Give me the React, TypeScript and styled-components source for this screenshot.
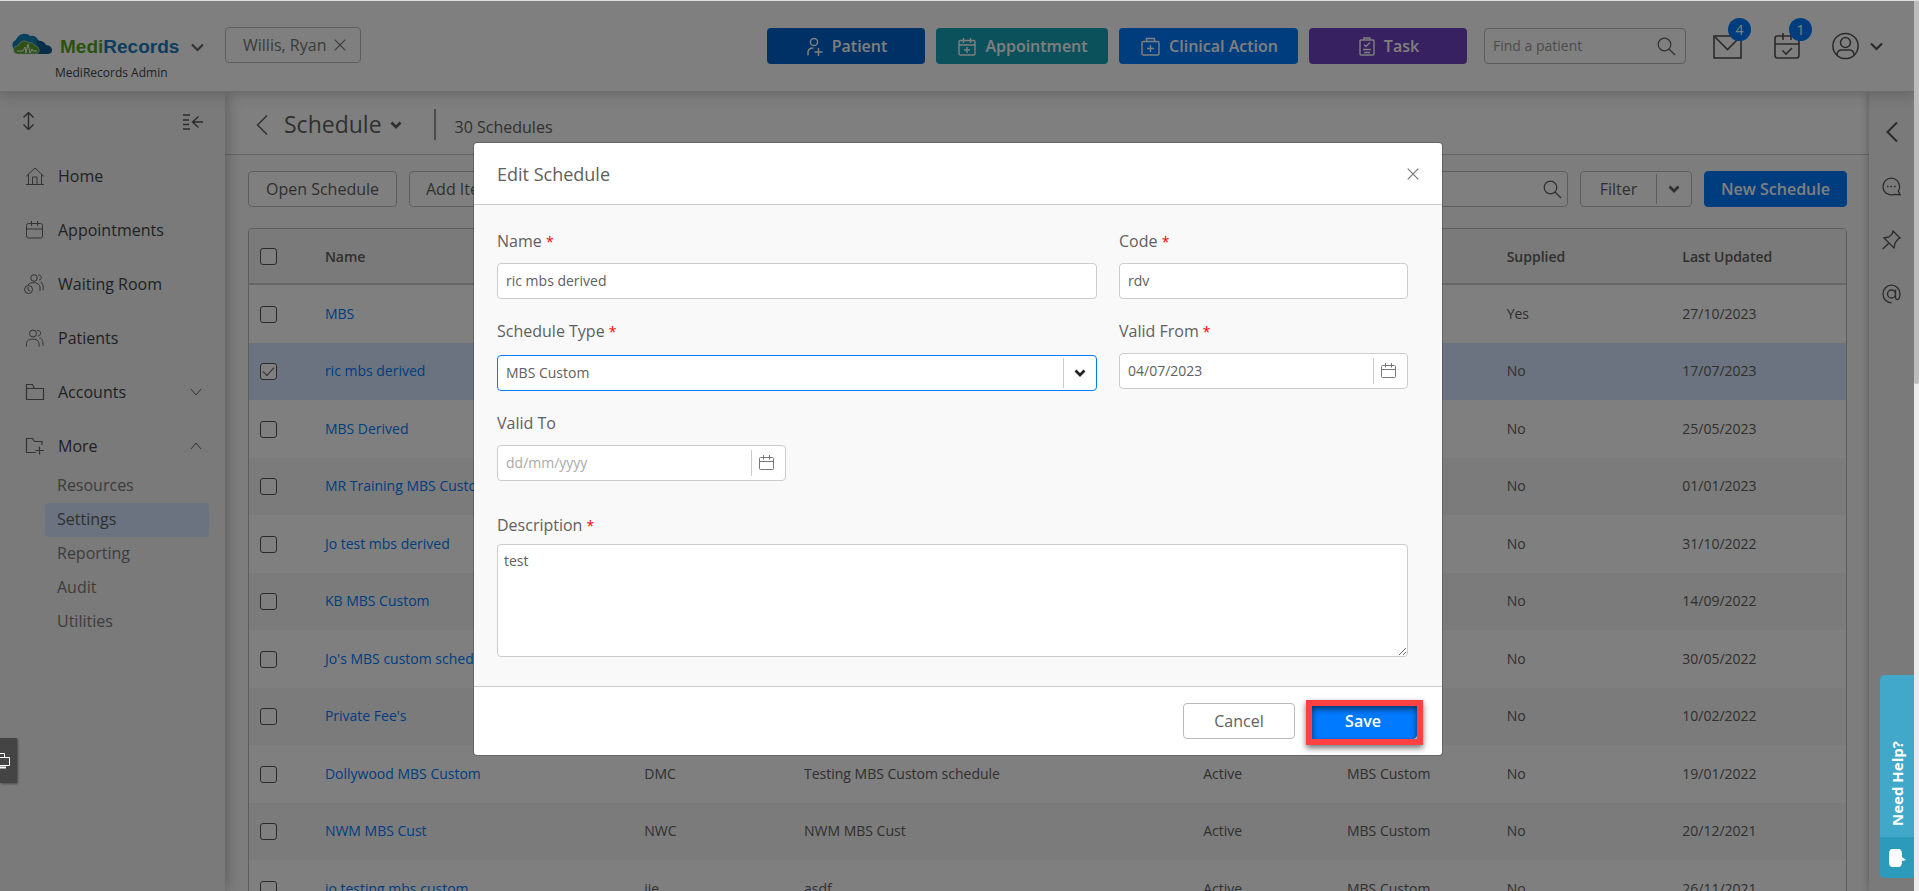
import React from "react";
import styled, { createGlobalStyle, css } from "styled-components";

const GlobalStyle = createGlobalStyle`
  *, *::before, *::after { box-sizing: border-box; }
  body {
    margin: 0;
    font-family: "Open Sans", "Noto Sans", sans-serif;
    font-size: 14px;
    color: #606060;
    overflow: hidden;
  }
  button, input, select, textarea { font: inherit; color: inherit; margin: 0; }
  button { cursor: pointer; }
  svg { display: block; flex: none; }
`;

/* ---------- shell ---------- */

const Window = styled.div`
  display: flex;
  height: 100vh;
  border-top: 1px solid #dcdfdf;
  background: #fff;
`;

const Page = styled.div`
  position: relative;
  flex: 1;
  min-width: 0;
  display: flex;
  flex-direction: column;
  overflow: hidden;
`;

const ScrollTrack = styled.div`
  flex: none;
  width: 5px;
  background: #ececec;
`;

const ScrollThumb = styled.div`
  height: 43%;
  border-radius: 0 0 3px 3px;
  background: #bcbcbc;
`;

const Body = styled.div`
  flex: 1;
  min-height: 0;
  display: flex;
`;

/* ---------- header ---------- */

const Header = styled.header`
  position: relative;
  z-index: 3;
  flex: none;
  display: flex;
  align-items: center;
  height: 91px;
  padding-right: 31px;
  background: #fff;
  border-bottom: 1px solid #ddd;
  box-shadow: 0 3px 12px rgba(0, 0, 0, 0.18);
`;

const Brand = styled.div`
  flex: none;
  align-self: stretch;
  width: 225px;
  padding: 32px 0 0 12px;
`;

const BrandRow = styled.div`
  display: flex;
  align-items: center;
  height: 28px;
  > svg { margin-bottom: 6px; }
  button { color: #666; }
`;

const BrandName = styled.span`
  margin: 0 12px 0 8px;
  font: bold 19px/28px "Liberation Sans", Arial, sans-serif;
  color: #1b7ab8;
  b { color: #56a51f; }
`;

const BrandSub = styled.div`
  margin-top: 3px;
  padding-left: 43px;
  font-size: 12px;
  font-weight: 500;
  line-height: 18px;
  color: #444;
`;

const PlainButton = styled.button`
  display: flex;
  align-items: center;
  justify-content: center;
  padding: 0;
  border: 0;
  background: none;
`;

const PatientTab = styled.div`
  display: flex;
  align-items: center;
  gap: 8px;
  height: 36px;
  margin-bottom: 2px;
  padding: 0 14px 0 17px;
  border: 1px solid #bbb;
  border-radius: 4px;
  font-size: 16px;
  color: #777;
`;

const Actions = styled.nav`
  display: flex;
  gap: 11px;
  margin-left: auto;
`;

const ActionButton = styled.button<{ $bg: string; $width: number }>`
  display: flex;
  align-items: center;
  justify-content: center;
  gap: 9px;
  width: ${(p) => p.$width}px;
  height: 36px;
  padding: 0 0 0 2px;
  border: 0;
  border-radius: 4px;
  background: ${(p) => p.$bg};
  color: #fff;
  font-size: 16px;
  font-weight: 600;
`;

const SearchBox = styled.label<{ $grow?: boolean }>`
  display: flex;
  align-items: center;
  height: 36px;
  padding: 0 9px 0 8px;
  border: 1px solid #bbb;
  border-radius: 4px;
  background: #fff;
  ${(p) => (p.$grow ? css`width: 320px; margin-left: auto; padding-right: 5px;` : css`width: 202px; margin: 0 27px 0 17px;`)}
  input {
    flex: 1;
    min-width: 0;
    padding: 0 0 2px;
    border: 0;
    outline: 0;
    background: none;
  }
  input::placeholder { color: #999; opacity: 1; }
`;

const HeaderIcons = styled.div`
  display: flex;
  align-items: center;
  gap: 32px;
`;

const IconButton = styled(PlainButton)`
  position: relative;
  gap: 11px;
  color: #555;
`;

const Badge = styled.span`
  position: absolute;
  left: 15px;
  top: -15px;
  width: 23px;
  height: 23px;
  border-radius: 50%;
  background: #007bff;
  color: #fff;
  line-height: 23px;
  text-align: center;
`;

/* ---------- left sidebar ---------- */

const Sidebar = styled.aside`
  position: relative;
  z-index: 2;
  flex: none;
  width: 225px;
  background: #f4f4f4;
  box-shadow: 2px 0 14px rgba(0, 0, 0, 0.26);
`;

const SidebarTools = styled.div`
  display: flex;
  justify-content: space-between;
  padding: 20px 22px 19px;
  color: #555;
`;

const MenuItem = styled.a`
  display: flex;
  align-items: center;
  height: 54px;
  padding: 0 23px 0 24px;
  font-size: 16px;
  font-weight: 500;
  color: #3f4549;
  text-decoration: none;
  svg { color: #666; }
  span { flex: 1; padding-left: 12px; }
`;

const SubMenu = styled.div`
  margin-top: -4px;
  padding: 0 16px 0 45px;
`;

const SubItem = styled.a<{ $active?: boolean }>`
  display: block;
  height: 34px;
  padding-left: 12px;
  border-radius: 4px;
  font-size: 16px;
  font-weight: 500;
  line-height: 32px;
  color: ${(p) => (p.$active ? "#606060" : "#7a7a7a")};
  background: ${(p) => (p.$active ? "#d4e6ff" : "none")};
  text-decoration: none;
`;

/* ---------- main ---------- */

const Main = styled.main`
  flex: 1;
  min-width: 0;
  overflow: hidden;
  background: #fbfbfb;
`;

const TitleBar = styled.div`
  display: flex;
  align-items: center;
  height: 63px;
  padding: 3px 0 0 31px;
  border-bottom: 1px solid #ccc;
  background: #fff;
`;

const Title = styled.h1`
  margin: 0 8px 0 16px;
  padding-bottom: 1px;
  font-size: 23px;
  font-weight: 500;
  line-height: 30px;
  color: #606060;
`;

const Count = styled.span`
  display: flex;
  align-items: center;
  height: 31px;
  margin-left: 32px;
  padding: 4px 0 0 19px;
  border-left: 2px solid #999;
  font-size: 16px;
`;

const Toolbar = styled.div`
  display: flex;
  gap: 12px;
  padding: 16px 22px 21px 23px;
`;

const Button = styled.button<{ $primary?: boolean; $width?: number }>`
  height: 36px;
  padding: 0 16px;
  border: 1px solid #bbb;
  border-radius: 4px;
  background: #fff;
  color: #606060;
  font-size: 16px;
  font-weight: 500;
  white-space: nowrap;
  ${(p) => p.$width && css`width: ${p.$width}px; padding: 0;`}
  ${(p) => p.$primary && css`background: #007bff; border-color: #007bff; color: #fff; font-weight: 600;`}
`;

const SplitButton = styled.div`
  display: flex;
  align-items: center;
  width: 112px;
  height: 36px;
  border: 1px solid #bbb;
  border-radius: 4px;
  background: #fff;
`;

const SplitMain = styled(PlainButton)`
  flex: 1;
  height: 30px;
  border-right: 1px solid #bbb;
  font-size: 16px;
  font-weight: 500;
`;

const SplitToggle = styled(PlainButton)`
  width: 34px;
  height: 34px;
`;

const TableFrame = styled.div`
  margin: 0 22px 0 23px;
  border: 1px solid #bbb;
  border-radius: 4px 4px 0 0;
  overflow: hidden;
  background: #fff;
`;

const Table = styled.table`
  width: 100%;
  table-layout: fixed;
  border-collapse: separate;
  border-spacing: 0;

  th, td { padding: 0 0 0 12px; text-align: left; white-space: nowrap; }
  th {
    height: 56px;
    background: #f4f4f4;
    border-bottom: 2px solid #ccc;
    font-weight: 600;
  }
  tbody tr:nth-child(odd) { height: 58px; }
  tbody tr:nth-child(even) { height: 57px; background: #f7f7f7; }
  td { padding-bottom: 2px; }
  th:first-child { padding-left: 11px; }
  td:first-child { padding: 0 0 0 11px; }
`;

const Col = styled.col<{ $share: number }>`
  width: ${(p) => p.$share}%;
`;

const Row = styled.tr<{ $selected: boolean }>`
  && td { ${(p) => p.$selected && css`background: #d4e6ff;`} }
`;

const RecordLink = styled.a`
  color: #007bff;
  text-decoration: none;
`;

const Check = styled.input`
  appearance: none;
  display: block;
  width: 17px;
  height: 17px;
  margin: 0;
  border: 1px solid #555;
  border-radius: 3px;
  background: #fff;
  &:checked::after {
    content: "";
    display: block;
    width: 11px;
    height: 6px;
    margin: 3px 0 0 2px;
    border: solid #555;
    border-width: 0 0 1px 1px;
    transform: rotate(-48deg);
  }
`;

/* ---------- right rail ---------- */

const Rail = styled.aside`
  position: relative;
  z-index: 2;
  flex: none;
  display: flex;
  flex-direction: column;
  align-items: center;
  width: 45px;
  padding-top: 13px;
  background: #f4f4f4;
  box-shadow: -1px 0 7px rgba(0, 0, 0, 0.26);
`;

const RailButton = styled(PlainButton)`
  width: 45px;
  height: 54px;
  color: #555;
`;

/* ---------- dialog ---------- */

const Scrim = styled.div`
  position: absolute;
  inset: 0;
  z-index: 10;
  padding: 141px 16px 0 18px;
  background: rgba(0, 0, 0, 0.5);
`;

const Dialog = styled.section`
  width: 100%;
  max-width: 970px;
  margin: 0 auto;
  border: 1px solid rgba(0, 0, 0, 0.2);
  border-radius: 4px;
  background: #fff;
  background-clip: padding-box;
`;

const DialogHeader = styled.div`
  display: flex;
  align-items: center;
  justify-content: space-between;
  height: 62px;
  padding: 0 23px;
  border-bottom: 1px solid #ccc;
  button { color: #777; }
`;

const DialogTitle = styled.h2`
  margin: 0;
  font-size: 18px;
  font-weight: 500;
  line-height: 24px;
`;

const Form = styled.form`
  display: grid;
  grid-template-columns: repeat(3, 1fr);
  gap: 20px 22px;
  padding: 24px 34px 29px 23px;
  background: #f9f9f9;
`;

const Field = styled.div<{ $span?: number; $gap?: number; $top?: number }>`
  display: flex;
  flex-direction: column;
  gap: ${(p) => p.$gap ?? 10}px;
  grid-column: span ${(p) => p.$span ?? 1};
  padding-top: ${(p) => p.$top ?? 0}px;
`;

const Label = styled.label`
  font-size: 16px;
  font-weight: 500;
  line-height: 24px;
  i { color: #f00; font-size: 14px; font-style: normal; font-weight: 400; line-height: 14px; }
`;

const Control = styled.div<{ $focused?: boolean }>`
  position: relative;
  display: flex;
  align-items: center;
  height: 36px;
  border: 1px solid ${(p) => (p.$focused ? "#007bff" : "#ccc")};
  border-radius: 4px;
  background: #fff;
  input, select {
    flex: 1;
    min-width: 0;
    height: 34px;
    padding: 0 8px 2px;
    border: 0;
    outline: 0;
    background: none;
    appearance: none;
  }
  input::placeholder { color: #aaa; opacity: 1; }
`;

const DateButton = styled(PlainButton)`
  width: 34px;
  height: 26px;
  padding: 0 5px 1px 0;
  border-left: 1px solid #ccc;
  color: #777;
`;

const SelectArrow = styled.span`
  position: absolute;
  right: 0;
  top: 2px;
  display: flex;
  align-items: center;
  justify-content: center;
  width: 33px;
  height: 30px;
  border-left: 1px solid #ccc;
  color: #222;
  pointer-events: none;
`;

const TextArea = styled.textarea`
  display: block;
  width: 100%;
  height: 113px;
  padding: 6px;
  border: 1px solid #ccc;
  border-radius: 4px;
  background: #fff;
  line-height: 20px;
  resize: vertical;
`;

const DialogFooter = styled.div`
  display: flex;
  justify-content: flex-end;
  gap: 14px;
  height: 69px;
  padding: 16px 25px 0 0;
  border-top: 1px solid #ccc;
`;

const Highlight = styled.div`
  position: relative;
  &::after {
    content: "";
    position: absolute;
    inset: -3px -6px auto -3px;
    height: 45px;
    border: 6px solid #ff4141;
    box-shadow: 0 3px 6px rgba(0, 0, 0, 0.55), inset 0 3px 6px rgba(0, 0, 0, 0.6);
    pointer-events: none;
  }
`;

/* ---------- edge tabs ---------- */

const HelpTab = styled.button`
  position: absolute;
  right: 0;
  bottom: 13px;
  z-index: 11;
  display: flex;
  flex-direction: column;
  width: 34px;
  height: 203px;
  padding: 0;
  border: 0;
  border-radius: 5px 0 0 5px;
  overflow: hidden;
  background: #41a8c9;
  color: #fff;
`;

const HelpText = styled.span`
  flex: 1;
  width: 34px;
  padding-top: 11px;
  writing-mode: vertical-rl;
  transform: rotate(180deg);
  font-size: 15px;
  font-weight: 700;
  line-height: 34px;
  text-align: left;
`;

const HelpIcon = styled.span`
  display: flex;
  align-items: center;
  justify-content: center;
  width: 34px;
  height: 41px;
  background: #2c9bbb;
`;

const ScreenTab = styled.button`
  position: absolute;
  left: 0;
  bottom: 108px;
  z-index: 11;
  display: flex;
  align-items: center;
  width: 17px;
  height: 45px;
  padding: 0;
  border: 0;
  background: #444;
  box-shadow: 1px 1px 2px rgba(0, 0, 0, 0.4);
`;

/* ---------- icons ---------- */

type IconProps = { w: number; h: number; sw?: number; children: React.ReactNode };

const Icon = ({ w, h, sw = 1, children }: IconProps) => (
  <svg width={w} height={h} viewBox={`0 0 ${w} ${h}`} fill="none" stroke="currentColor" strokeWidth={sw} aria-hidden="true">
    {children}
  </svg>
);

const CloudLogo = () => (
  <svg width="40" height="23" viewBox="0 0 40 23" aria-hidden="true">
    <path d="M5 18C-1 16-1 8 4 7 6 0 15-1 18 3c4-1 7 1 8 4 3 1 3 6 1 9L12 19z" fill="#1283bb" />
    <path d="M24 8c5-1 9 1 10 4 4 0 6 3 6 5 0 3-2 4-5 4H23l3-8z" fill="#115c90" />
    <path d="M6 21c-6 0-6-8 0-8 1-5 8-7 11-3 3-1 5 0 6 3 5 0 6 8 0 8z" fill="#5aa52a" stroke="#ddd" strokeWidth=".7" />
    <path d="M5 18h6l2-4 1 6 2-9 2 9 2-4 1 2h4" fill="none" stroke="#fff" strokeWidth="1" />
  </svg>
);

const ChevronBold = () => (
  <Icon w={13} h={9} sw={2.2}><path d="M1 1.500l5.500 5.500 5.500-5.500" /></Icon>
);
const ChevronSmall = () => (
  <Icon w={12} h={8} sw={2.7}><path d="M1.500 1.500L6 6l4.500-4.500" /></Icon>
);
const ChevronThin = ({ up }: { up?: boolean }) => (
  <Icon w={12} h={8}><path d={up ? "M1 7l5-6 5 6" : "M1 1l5 6 5-6"} /></Icon>
);
const AngleLeft = ({ sw = 1.5 }: { sw?: number }) => (
  <Icon w={12} h={22} sw={sw}><path d="M11 1.500L1.500 11l9.500 9.500" /></Icon>
);
const Cross = () => (
  <Icon w={12} h={12} sw={1.2}><path d="M.7.7l10.600 10.600M11.300.7L.7 11.300" /></Icon>
);
const Magnifier = () => (
  <Icon w={19} h={19} sw={1.2}><circle cx="7.500" cy="7.500" r="6.300" /><path d="M12 12l6 6" /></Icon>
);
const PatientAdd = () => (
  <Icon w={16} h={19} sw={1.5}>
    <circle cx="7" cy="5" r="3.600" />
    <path d="M1 18.500v-3c0-3 2-4.500 5.500-4.500M11.500 11v8M7.500 15h8" />
  </Icon>
);
const CalendarAdd = () => (
  <Icon w={18} h={19} sw={1.4}>
    <rect x="1" y="3.500" width="16" height="14.500" rx="1.500" />
    <path d="M1 8h16M5.500 1v5M12.500 1v5M9 10v6M6 13h6" />
  </Icon>
);
const MedicalBag = () => (
  <Icon w={19} h={19} sw={1.4}>
    <rect x="1" y="4.500" width="17" height="13.500" rx="1.500" />
    <path d="M5.500 4.500v-3h8v3M9.500 8v7M6 11.500h7" />
  </Icon>
);
const Clipboard = () => (
  <Icon w={16} h={19} sw={1.4}>
    <rect x="1" y="3" width="14" height="15" rx="1" />
    <path d="M5 3V1h6v2M5 7.500l2 2 4-4M4 12.500h8M5 15.500h6" />
  </Icon>
);
const Mail = () => (
  <Icon w={29} h={26} sw={1.6}>
    <rect x="1" y="3" width="27" height="22" />
    <path d="M1.500 3.500l13 13 13-13" />
  </Icon>
);
const CalendarCheck = () => (
  <Icon w={26} h={26} sw={1.6}>
    <rect x="1" y="3" width="24" height="22" rx="2.500" />
    <path d="M1 11h24M9 0v7M17 0v7M8.500 17.500l3.500 3.500 6-6" />
  </Icon>
);
const UserCircle = () => (
  <Icon w={27} h={28} sw={1.5}>
    <circle cx="13.500" cy="14" r="12.600" />
    <circle cx="13.500" cy="10.500" r="5" />
    <path d="M5 23c0-4 2-5 5-5h7c3 0 5 1 5 5" />
  </Icon>
);
const UpDown = () => (
  <Icon w={13} h={18} sw={1.4}><path d="M6.500 1v16M1.500 5.500l5-5 5 5M1.500 12.500l5 5 5-5" /></Icon>
);
const Collapse = () => (
  <Icon w={20} h={18} sw={1.3}><path d="M0 3h7M0 8h6M0 12.500h6M0 17h7M20 10H9.500M15.500 4.500L9.500 10l6 5.500" /></Icon>
);
const Home = () => (
  <Icon w={22} h={20}>
    <path d="M2 10.500L11 2l9 8.500M4.500 8.500v10M17.500 8.500v10M2 18.500h18M8.500 18v-7h4.500v7" />
  </Icon>
);
const Calendar = () => (
  <Icon w={22} h={20}>
    <rect x="2.500" y="3.500" width="16" height="14.500" rx="2" />
    <path d="M2.500 9h16M7.500 1v5M13.500 1v5" />
  </Icon>
);
const People = () => (
  <Icon w={22} h={20}>
    <circle cx="9" cy="5.500" r="3.500" />
    <path d="M2.500 18.500v-3c0-6 12.500-6 12.500 0v3M13 2.500c4-1 5 5 1 5.500M15.500 10c3 .500 3.500 3 3.500 8" />
  </Icon>
);
const WaitingRoom = () => (
  <Icon w={22} h={20}>
    <circle cx="10" cy="4" r="3.300" />
    <path d="M4 11c2-3.500 11-3.500 12 2v4M14 1c4-.500 4.500 4.500 1 5M16.500 8c2.500 1 3 4 2.500 8" />
    <circle cx="4.500" cy="15.500" r="4" /><path d="M4 13v3l2 1" />
  </Icon>
);
const Folder = ({ plus }: { plus?: boolean }) => (
  <Icon w={22} h={20} sw={1.2}>
    <path d={plus ? "M12 16.500H2.500v-14h6l2 3H18V9M15.500 10.500v8M11.500 14.500h8.500" : "M2.500 6.500v-4h6l2 4M2.500 6.500h17v11h-17z"} />
  </Icon>
);
const Bubble = () => (
  <Icon w={19} h={19} sw={1.3}>
    <path d="M12.500 17.300C6 19.500 1 15 1 9.500a8.300 8.300 0 0 1 16.600 0c0 2-.6 3.500-1.300 4.500l1.700 3.700z" />
    <path d="M5 9.500h1.500M8.500 9.500H10M12 9.500h1.500" />
  </Icon>
);
const Pin = () => (
  <Icon w={19} h={20} sw={1.3}>
    <path d="M11 1l7 7-2 1-3 4-1 5-10-10 5-1 3.500-3.500zM6.500 13.500L.7 19" />
  </Icon>
);
const AtSign = () => (
  <Icon w={19} h={20} sw={1.3}>
    <circle cx="9.500" cy="10" r="4" />
    <path d="M13.500 5.500V13c0 4 4.500 3.500 4.500-3a8.500 8.800 0 1 0-8.500 8.800" />
  </Icon>
);
const DateIcon = () => (
  <Icon w={15} h={15}>
    <rect x=".5" y="2.500" width="14" height="12" rx="1" />
    <path d="M.5 6.500h14M4.500 0v4.500M10.500 0v4.500" />
  </Icon>
);

/* ---------- data ---------- */

const menu = [
  { label: "Home", icon: <Home /> },
  { label: "Appointments", icon: <Calendar /> },
  { label: "Waiting Room", icon: <WaitingRoom /> },
  { label: "Patients", icon: <People /> },
  { label: "Accounts", icon: <Folder />, tail: <ChevronThin /> },
  { label: "More", icon: <Folder plus />, tail: <ChevronThin up /> },
];

const subMenu = ["Resources", "Settings", "Reporting", "Audit", "Utilities"];

const columns = [
  { share: 20, title: "Name" },
  { share: 10, title: "" },
  { share: 25, title: "" },
  { share: 9, title: "" },
  { share: 10, title: "" },
  { share: 11, title: "Supplied" },
  { share: 11, title: "Last Updated" },
];

const rows = [
  ["MBS", "", "", "", "", "Yes", "27/10/2023"],
  ["ric mbs derived", "", "", "", "", "No", "17/07/2023"],
  ["MBS Derived", "", "", "", "", "No", "25/05/2023"],
  ["MR Training MBS Custom", "", "", "", "", "No", "01/01/2023"],
  ["Jo test mbs derived", "", "", "", "", "No", "31/10/2022"],
  ["KB MBS Custom", "", "", "", "", "No", "14/09/2022"],
  ["Jo's MBS custom schedule", "", "", "", "", "No", "30/05/2022"],
  ["Private Fee's", "", "", "", "", "No", "10/02/2022"],
  ["Dollywood MBS Custom", "DMC", "Testing MBS Custom schedule", "Active", "MBS Custom", "No", "19/01/2022"],
  ["NWM MBS Cust", "NWC", "NWM MBS Cust", "Active", "MBS Custom", "No", "20/12/2021"],
  ["jo testing mbs custom", "jje", "asdf", "Active", "MBS Custom", "No", "26/11/2021"],
];

/* ---------- page ---------- */

const AppHeader = () => (
  <Header>
    <Brand>
      <BrandRow>
        <CloudLogo />
        <BrandName><b>Medi</b>Records</BrandName>
        <PlainButton aria-label="Switch practice"><ChevronBold /></PlainButton>
      </BrandRow>
      <BrandSub>MediRecords Admin</BrandSub>
    </Brand>
    <PatientTab>
      Willis, Ryan
      <PlainButton aria-label="Close patient"><Cross /></PlainButton>
    </PatientTab>
    <Actions>
      <ActionButton $bg="#0062cc" $width={158}><PatientAdd />Patient</ActionButton>
      <ActionButton $bg="#17a2b8" $width={172}><CalendarAdd />Appointment</ActionButton>
      <ActionButton $bg="#007bff" $width={179}><MedicalBag />Clinical Action</ActionButton>
      <ActionButton $bg="#6f42c1" $width={158}><Clipboard />Task</ActionButton>
    </Actions>
    <SearchBox>
      <input aria-label="Find a patient" placeholder="Find a patient" />
      <Magnifier />
    </SearchBox>
    <HeaderIcons>
      <IconButton aria-label="Messages"><Mail /><Badge>4</Badge></IconButton>
      <IconButton aria-label="Tasks"><CalendarCheck /><Badge>1</Badge></IconButton>
      <IconButton aria-label="Account"><UserCircle /><ChevronBold /></IconButton>
    </HeaderIcons>
  </Header>
);

const SideMenu = () => (
  <Sidebar>
    <SidebarTools>
      <PlainButton aria-label="Resize"><UpDown /></PlainButton>
      <PlainButton aria-label="Collapse menu"><Collapse /></PlainButton>
    </SidebarTools>
    {menu.map((m) => (
      <MenuItem key={m.label} href="#">{m.icon}<span>{m.label}</span>{m.tail}</MenuItem>
    ))}
    <SubMenu>
      {subMenu.map((s) => (
        <SubItem key={s} href="#" $active={s === "Settings"}>{s}</SubItem>
      ))}
    </SubMenu>
  </Sidebar>
);

const ScheduleList = () => (
  <Main>
    <TitleBar>
      <PlainButton aria-label="Back"><AngleLeft /></PlainButton>
      <Title>Schedule</Title>
      <ChevronSmall />
      <Count>30 Schedules</Count>
    </TitleBar>
    <Toolbar>
      <Button $width={149}>Open Schedule</Button>
      <Button>Add Items</Button>
      <SearchBox $grow>
        <input aria-label="Search schedules" />
        <Magnifier />
      </SearchBox>
      <SplitButton>
        <SplitMain>Filter</SplitMain>
        <SplitToggle aria-label="Filter options"><ChevronSmall /></SplitToggle>
      </SplitButton>
      <Button $primary $width={143}>New Schedule</Button>
    </Toolbar>
    <TableFrame>
      <Table>
        <colgroup>
          <Col $share={4} />
          {columns.map((c, i) => <Col key={i} $share={c.share} />)}
        </colgroup>
        <thead>
          <tr>
            <th><Check type="checkbox" aria-label="Select all" /></th>
            {columns.map((c, i) => <th key={i}>{c.title}</th>)}
          </tr>
        </thead>
        <tbody>
          {rows.map(([name, ...cells], r) => (
            <Row key={name} $selected={r === 1}>
              <td><Check type="checkbox" aria-label={name} defaultChecked={r === 1} /></td>
              <td><RecordLink href="#">{name}</RecordLink></td>
              {cells.map((c, i) => <td key={i}>{c}</td>)}
            </Row>
          ))}
        </tbody>
      </Table>
    </TableFrame>
  </Main>
);

const EditDialog = () => (
  <Dialog role="dialog" aria-labelledby="dialog-title">
    <DialogHeader>
      <DialogTitle id="dialog-title">Edit Schedule</DialogTitle>
      <PlainButton aria-label="Close"><Cross /></PlainButton>
    </DialogHeader>
    <Form id="schedule-form">
      <Field $span={2}>
        <Label htmlFor="name">Name <i>*</i></Label>
        <Control><input id="name" defaultValue="ric mbs derived" /></Control>
      </Field>
      <Field>
        <Label htmlFor="code">Code <i>*</i></Label>
        <Control><input id="code" defaultValue="rdv" /></Control>
      </Field>
      <Field $span={2} $gap={12}>
        <Label htmlFor="type">Schedule Type <i>*</i></Label>
        <Control $focused>
          <select id="type" defaultValue="MBS Custom"><option>MBS Custom</option></select>
          <SelectArrow><ChevronSmall /></SelectArrow>
        </Control>
      </Field>
      <Field>
        <Label htmlFor="from">Valid From <i>*</i></Label>
        <Control>
          <input id="from" defaultValue="04/07/2023" />
          <DateButton type="button" aria-label="Pick start date"><DateIcon /></DateButton>
        </Control>
      </Field>
      <Field>
        <Label htmlFor="to">Valid To</Label>
        <Control>
          <input id="to" placeholder="dd/mm/yyyy" />
          <DateButton type="button" aria-label="Pick end date"><DateIcon /></DateButton>
        </Control>
      </Field>
      <Field $span={3} $gap={7} $top={12}>
        <Label htmlFor="description">Description <i>*</i></Label>
        <TextArea id="description" defaultValue="test" />
      </Field>
    </Form>
    <DialogFooter>
      <Button type="button" $width={112}>Cancel</Button>
      <Highlight><Button type="button" $primary $width={108}>Save</Button></Highlight>
    </DialogFooter>
  </Dialog>
);

export default function App() {
  return (
    <>
      <GlobalStyle />
      <Window>
        <Page>
          <AppHeader />
          <Body>
            <SideMenu />
            <ScheduleList />
            <Rail>
              <RailButton aria-label="Expand panel"><AngleLeft sw={2} /></RailButton>
              <RailButton aria-label="Chat"><Bubble /></RailButton>
              <RailButton aria-label="Pinned"><Pin /></RailButton>
              <RailButton aria-label="Mentions"><AtSign /></RailButton>
            </Rail>
          </Body>
          <Scrim><EditDialog /></Scrim>
          <ScreenTab aria-label="Share screen">
            <svg width="11" height="17" viewBox="0 0 11 17" fill="none" stroke="#fff" aria-hidden="true">
              <path d="M0 1.500h4.500V5M0 5.500h9.500v8H0" />
              <path d="M0 15.500h6" strokeWidth="2" />
            </svg>
          </ScreenTab>
          <HelpTab>
            <HelpText>Need Help?</HelpText>
            <HelpIcon>
              <svg width="18" height="20" viewBox="0 0 18 20" fill="#fff" aria-hidden="true">
                <path d="M5 1h5c3 0 4 2 4 5v3l4 3-4 1c0 4-1 6-4 6H5c-3 0-4-2-4-5V6c0-3 1-5 4-5z" />
              </svg>
            </HelpIcon>
          </HelpTab>
        </Page>
        <ScrollTrack><ScrollThumb /></ScrollTrack>
      </Window>
    </>
  );
}
